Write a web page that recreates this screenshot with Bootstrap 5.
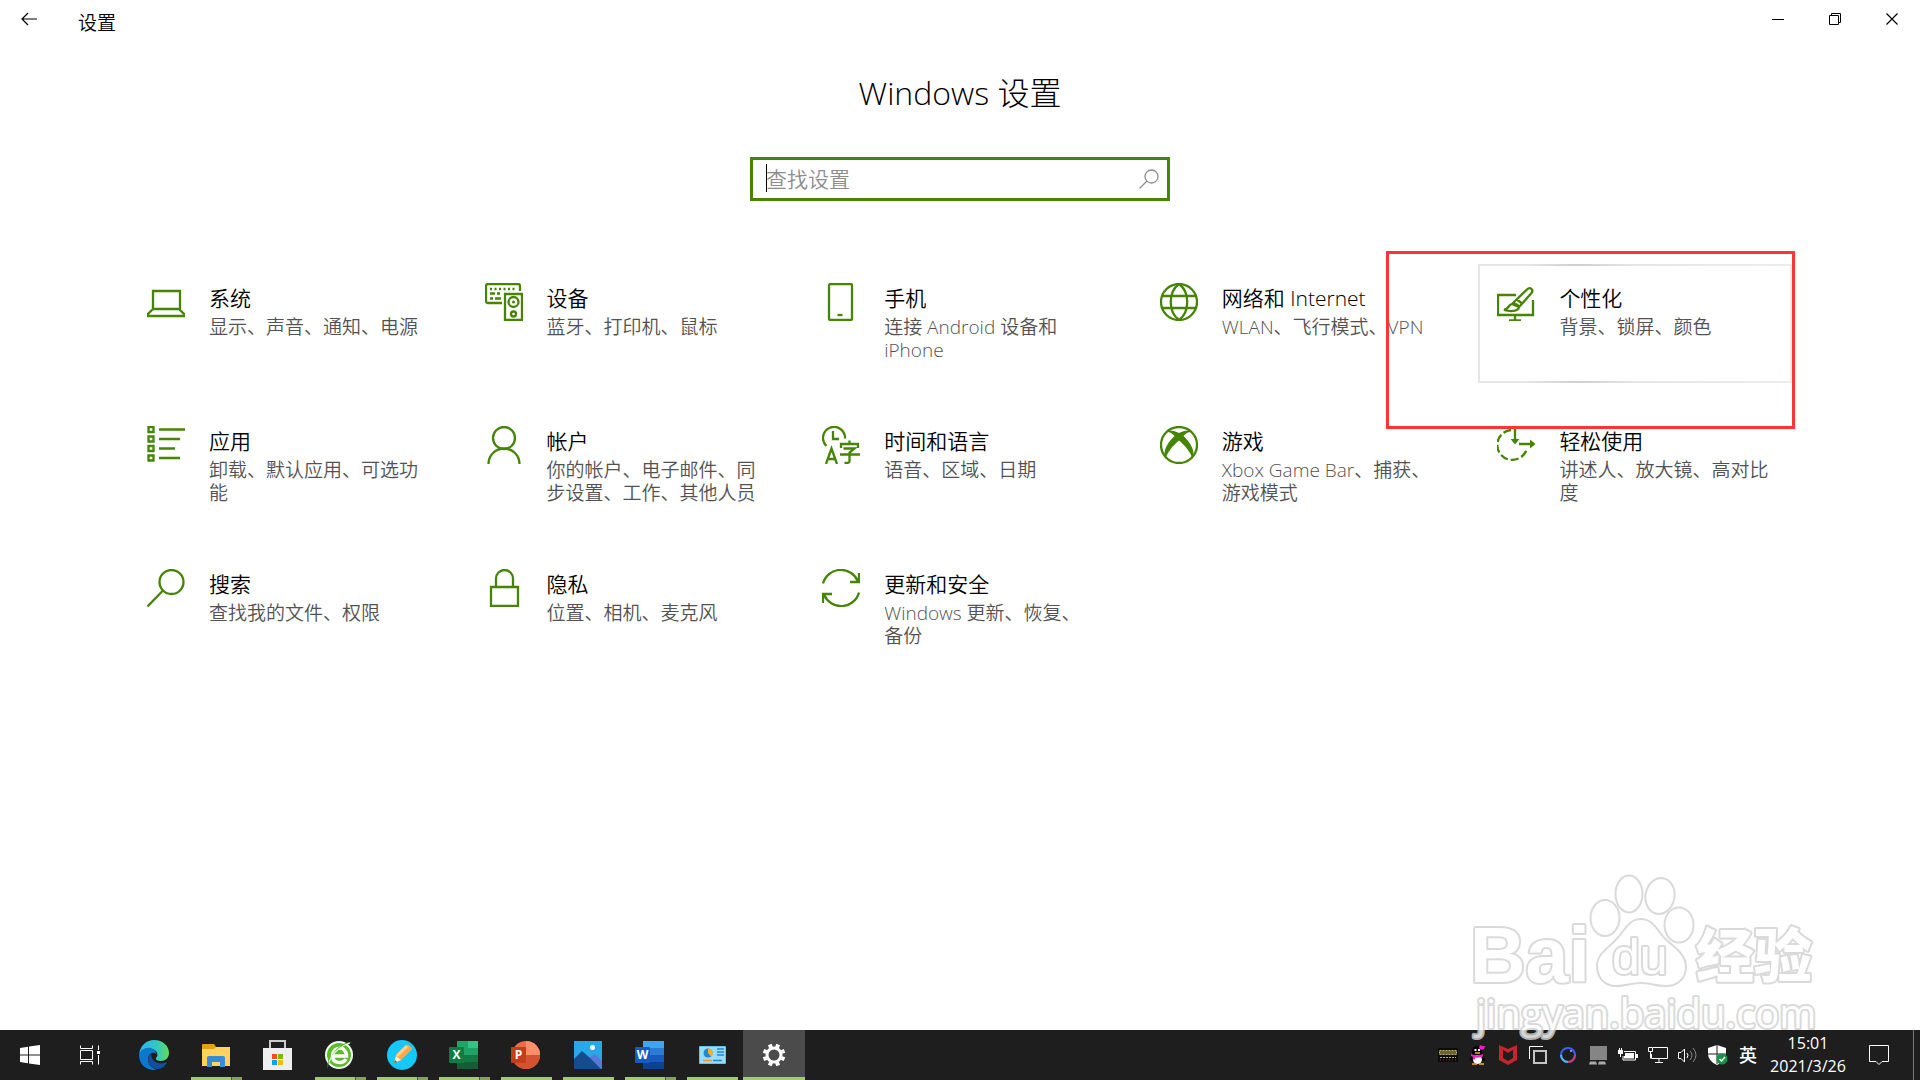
<!DOCTYPE html>
<html lang="zh-CN">
<head>
<meta charset="utf-8">
<meta name="viewport" content="width=device-width, initial-scale=1">
<title>设置</title>
<link rel="stylesheet" href="https://cdn.jsdelivr.net/npm/bootstrap@5.3.0/dist/css/bootstrap.min.css">
<style>
:root{--accent:#468405;--run:#a1cd63;--run-dark:#83a457}
body{font-family:"Open Sans","Noto Sans CJK SC",sans-serif;background:#fff;color:#000}
.bare{border:0;background:none;padding:0;color:inherit;display:flex;align-items:center;justify-content:center}
.win-btn{width:57px;height:38px}
.back-btn{width:58px;height:38px}
.app-title{font-size:19px;line-height:30px;padding:8px 0 0 20px;font-weight:350}
.page-title{font-size:32px;line-height:42px;font-weight:300;margin:34px 0 43px}
.finder{width:420px;height:44px;border:3px solid var(--accent);background:#fff}
.finder input{border:0;outline:0;background:none;font-size:21px;font-weight:350;line-height:30px;padding:0 0 0 13px;min-width:0}
.finder input::placeholder{color:#8d8d8d;opacity:1}
.finder .caret{position:absolute;left:13px;top:4px;width:1px;height:28px;background:#000}
.settings-area{padding:63px 128px 24px}
.tiles{--bs-gutter-x:24px;--bs-gutter-y:24px}
.tile{display:flex;gap:24px;min-height:119px;padding:19px 20px 0 19px;color:#000;text-decoration:none;height:100%}
.tile svg{width:38px;height:38px;flex:none;fill:none;stroke:var(--accent);stroke-width:2.3}
.tile .solid{fill:var(--accent);stroke:none}
.tile-name{font-size:21px;line-height:30px;font-weight:350;display:block;margin-bottom:3px}
.tile-info{font-size:19px;line-height:23px;font-weight:350;color:#525252;display:block}
.tile.hot{border:2px solid #e4e4e4;border-image:linear-gradient(90deg,#e6e6e6 15%,#cfcfcf 32%,#e6e6e6 50%,#ececec) 2;padding:17px 18px 0 17px}
.marker{position:absolute;left:-80px;right:9px;top:-13px;bottom:-46px;border:3px solid #ff3535;pointer-events:none;z-index:2}
.watermark{position:absolute;right:80px;bottom:30px;width:400px;height:190px;pointer-events:none;z-index:3;opacity:.82}
.watermark text,.watermark path,.watermark ellipse{fill:#fff;stroke:#d2d2d2;stroke-width:4;paint-order:stroke;stroke-linejoin:round}
.taskbar{background:#1e1e1e;height:50px;color:#fff}
.sys{width:60px;height:50px}
.task-view{margin-right:3px}
.app{width:62px;height:50px;position:relative}
.app.on::after{content:"";position:absolute;left:6px;right:5px;bottom:0;height:3px;background:var(--run)}
.app.multi::after{background:linear-gradient(90deg,var(--run) 40px,#4c5c38 40px,#4c5c38 41px,var(--run-dark) 41px)}
.app.current{background:#4b4b4b}
.app.current::after{left:0;right:0}
.tray{width:30px;height:50px}
.clock{width:90px;font-size:16px;line-height:23px;text-align:center}
.ime{font-size:18px;font-weight:500}
.peek{width:7px;border-left:1px solid #777}
</style>
</head>
<body>
<div class="d-flex flex-column min-vh-100 position-relative">
<header class="d-flex align-items-start">
  <button class="bare back-btn" aria-label="返回"><svg width="16" height="14" viewBox="0 0 16 14" fill="none" stroke="#000" stroke-width="1.2"><path d="M7 1 1 7l6 6M1 7h15"/></svg></button>
  <div class="app-title">设置</div>
  <div class="d-flex ms-auto">
    <button class="bare win-btn" aria-label="最小化"><svg width="12" height="12"><path d="M0 6.5h12" stroke="#000"/></svg></button>
    <button class="bare win-btn" aria-label="还原"><svg width="12" height="12" fill="none" stroke="#000"><path d="M.5 2.5h9v9h-9zM2.500 2.500v-2h9v9h-2"/></svg></button>
    <button class="bare win-btn" aria-label="关闭"><svg width="12" height="12"><path d="M.5.5l11 11M11.500.5l-11 11" stroke="#000" stroke-width="1.2"/></svg></button>
  </div>
</header>

<main class="flex-grow-1">
  <div class="d-flex flex-column align-items-center">
    <h1 class="page-title">Windows 设置</h1>
    <div class="finder d-flex align-items-center position-relative">
      <input type="text" class="flex-grow-1" placeholder="查找设置" aria-label="查找设置">
      <span class="caret"></span>
      <button class="bare me-2" aria-label="搜索"><svg width="20" height="20" viewBox="0 0 20 20" fill="none" stroke="#8d8d8d" stroke-width="1.300"><circle cx="12.500" cy="7.500" r="6.500"/><path d="M8 12 .5 19.500"/></svg></button>
    </div>
  </div>

  <nav class="settings-area" aria-label="设置类别">
    <div class="row row-cols-1 row-cols-md-3 row-cols-xl-5 tiles">
      <div class="col"><a href="#" class="tile">
        <svg viewBox="0 0 38 38"><path d="M6 8h27v18H6zM6 26l-5 5v2h36v-2l-5-5"/></svg>
        <span><span class="tile-name">系统</span><span class="tile-info">显示、声音、通知、电源</span></span></a></div>
      <div class="col"><a href="#" class="tile">
        <svg viewBox="0 0 38 38"><path d="M17 20H3a2 2 0 0 1-2-2V3a2 2 0 0 1 2-2h30a2 2 0 0 1 2 2v5"/><path stroke-dasharray="2 2.500" d="M5 6h26"/><path d="M5 10.500h5m2 0h3M5 15.500h3m2 0h6"/><path d="M20 11h17v26H20z"/><circle cx="28.500" cy="19" r="5"/><circle class="solid" cx="28.500" cy="19" r="1.500"/><circle cx="28.500" cy="31" r="2.500"/></svg>
        <span><span class="tile-name">设备</span><span class="tile-info">蓝牙、打印机、鼠标</span></span></a></div>
      <div class="col"><a href="#" class="tile">
        <svg viewBox="0 0 38 38"><rect x="7" y="1" width="23" height="36" rx="1.500"/><path d="M15.500 32h5"/></svg>
        <span><span class="tile-name">手机</span><span class="tile-info">连接 Android 设备和 iPhone</span></span></a></div>
      <div class="col"><a href="#" class="tile">
        <svg viewBox="0 0 38 38"><circle cx="19" cy="19" r="18"/><path d="M19 1C8 9 8 29 19 37M19 1c11 8 11 28 0 36M3 13h32M3 25h32"/></svg>
        <span><span class="tile-name">网络和 Internet</span><span class="tile-info">WLAN、飞行模式、VPN</span></span></a></div>
      <div class="col position-relative"><a href="#" class="tile hot">
        <svg viewBox="0 0 38 38"><path d="M19 12H1v20h35V17M18 33v4M12 37.500h12" /><path d="m15 21 15-14.500c3-3 7 0 4.500 3.500L22 24M15 21c-4 1-3 5-8 6 6 1.500 14 2 15-3zM15 21c3-1 6 1 7 3M20 16.500l5 4"/></svg>
        <span><span class="tile-name">个性化</span><span class="tile-info">背景、锁屏、颜色</span></span></a><div class="marker"></div></div>
      <div class="col"><a href="#" class="tile">
        <svg viewBox="0 0 38 38"><path d="M1.500 1h5v5h-5zM1.500 10.500h5v5h-5zM1.500 20h5v5h-5zM1.500 29.500h5v5h-5zM12 3.500h26M12 13h21M12 22.500h16M12 32h21"/></svg>
        <span><span class="tile-name">应用</span><span class="tile-info">卸载、默认应用、可选功能</span></span></a></div>
      <div class="col"><a href="#" class="tile">
        <svg viewBox="0 0 38 38"><circle cx="19" cy="12" r="11"/><path d="M3.500 38a15.500 15.500 0 0 1 31 0"/></svg>
        <span><span class="tile-name">帐户</span><span class="tile-info">你的帐户、电子邮件、同步设置、工作、其他人员</span></span></a></div>
      <div class="col"><a href="#" class="tile">
        <svg viewBox="0 0 38 38"><path d="M4.500 20A11 11 0 1 1 23 12.500M11 5v8h6"/><path d="m4 38 5.500-15.500L15 38M6 33h7M27.500 14.500V18M19 22v-4h17v4M21.500 22.500h11l-5 4V35c0 2-1 2-5 2M18 28.500h20"/></svg>
        <span><span class="tile-name">时间和语言</span><span class="tile-info">语音、区域、日期</span></span></a></div>
      <div class="col"><a href="#" class="tile">
        <svg viewBox="0 0 38 38"><circle cx="19" cy="19" r="18"/><path class="solid" d="M6.500 6c4-2.500 9-1 12.500 1 3.500-2 8.500-3.500 12.500-1-3-.5-6 1.500-8 4 6 6 12.500 14 9 23-1.500-6.500-8-14-13.500-18.500C13.500 19 7 26.500 5.500 33 2 24 8.500 16 14.500 10c-2-2.500-5-4.500-8-4z"/></svg>
        <span><span class="tile-name">游戏</span><span class="tile-info">Xbox Game Bar、捕获、游戏模式</span></span></a></div>
      <div class="col"><a href="#" class="tile">
        <svg viewBox="0 0 38 38"><path stroke-dasharray="8 3" d="M14 4a15 15 0 1 0 16 18"/><path d="M18 0v15M22 18h13"/><path class="solid" d="M13.500 13h9L18 18.500zM33 13.500v9l5.500-4.500z"/></svg>
        <span><span class="tile-name">轻松使用</span><span class="tile-info">讲述人、放大镜、高对比度</span></span></a></div>
      <div class="col"><a href="#" class="tile">
        <svg viewBox="0 0 38 38"><circle cx="24.500" cy="13" r="12"/><path d="M16 21.500.500 37.500"/></svg>
        <span><span class="tile-name">搜索</span><span class="tile-info">查找我的文件、权限</span></span></a></div>
      <div class="col"><a href="#" class="tile">
        <svg viewBox="0 0 38 38"><path d="M6 18h27v19H6zM11 18V9.500a8.500 8.500 0 0 1 17 0V18"/></svg>
        <span><span class="tile-name">隐私</span><span class="tile-info">位置、相机、麦克风</span></span></a></div>
      <div class="col"><a href="#" class="tile">
        <svg viewBox="0 0 38 38"><path d="M1 14.500a18.500 18.500 0 0 1 35-2M37 4v9h-9M37 23.500a18.500 18.500 0 0 1-35 2M1 34v-9h9"/></svg>
        <span><span class="tile-name">更新和安全</span><span class="tile-info">Windows 更新、恢复、备份</span></span></a></div>
    </div>
  </nav>
</main>

<svg class="watermark" viewBox="0 0 400 190" aria-label="Baidu 经验">
  <text x="30" y="122" font-family="Liberation Sans" font-weight="700" font-size="77">Bai</text>
  <ellipse cx="165" cy="58" rx="13.500" ry="17"/><ellipse cx="189" cy="34" rx="12.500" ry="17.500"/><ellipse cx="220" cy="36" rx="13.500" ry="17" transform="rotate(10 220 36)"/><ellipse cx="239" cy="65" rx="13.500" ry="16.500"/>
  <path d="M201 60c12 0 15 11 24 20 9 8 20 15 20 27s-9 18-19 18c-9 0-16-3-25-3s-16 3-25 3c-11 0-18-8-18-19 0-12 11-17 19-26 9-9 12-20 24-20z"/>
  <text x="172" y="114" font-family="Liberation Sans" font-size="50">du</text>
  <text x="256" y="117" font-family="Noto Sans CJK SC" font-weight="900" font-size="58">经验</text>
  <text x="36" y="168" font-family="Open Sans" font-size="40">jingyan.baidu.com</text>
</svg>

<footer class="taskbar d-flex">
  <button class="bare sys" aria-label="开始"><svg width="20" height="20" fill="#fff"><path d="M0 3l8-1.200V9.500H0zM9 1.600 20 0v9.500H9zM0 10.500h8v7.700L0 17zM9 10.500h11V20L9 18.400z"/></svg></button>
  <button class="bare sys task-view" aria-label="任务视图"><svg width="20" height="20" fill="none" stroke="#fff"><path d="M.5.500v3h12v-3M.5 5.500h12v9H.5zM.5 19.500v-3h12v3M18.500.500V5M18.500 10v9.500"/><path d="M17 6h3v3h-3z" fill="#fff" stroke="none"/></svg></button>
  <button class="bare app" aria-label="Edge"><svg width="30" height="30" viewBox="0 0 30 30"><defs><linearGradient id="ea"><stop stop-color="#2bb5ee"/><stop offset=".6" stop-color="#35c6c0"/><stop offset="1" stop-color="#62df55"/></linearGradient></defs><path d="M0 15C1 5 8 0 15 0c9 0 15 6 15 13 0 5-4 8-8 8-3 0-6-1-5-3 3-3 1-8-4-9-6-1-11 1-13 6z" fill="url(#ea)"/><path d="M0 15c1-5 6-8 12-7 3 1 5 3 5 6-3-3-8 0-8 5 0 6 4 9 9 11C8 31 0 25 0 15z" fill="#0b78d0"/><path d="M13 13c-5 3-5 9-1 13 4 5 13 4 16-4-6 3-13 1-15-4-1-2-1-4 0-5z" fill="#11509e"/></svg></button>
  <button class="bare app on multi" aria-label="文件资源管理器"><svg width="28" height="24"><path d="M0 2q0-1 1-1h11l2 3h12q2 0 2 2v16H1q-1 0-1-1z" fill="#e5a20a"/><path d="M0 6h12l2-2h14v19H0z" fill="#ffd35c"/><path d="M5 24V15q0-2 2-2h14q2 0 2 2v9h-5v-5h-8v5z" fill="#368edb"/></svg></button>
  <button class="bare app" aria-label="Microsoft Store"><svg width="30" height="30"><path d="M7 9V1h15v8" fill="none" stroke="#ccc" stroke-width="2"/><path d="M0 8h29v22H0z" fill="#eee"/><path fill="#f25022" d="M9 14h5v5H9z"/><path fill="#7fba00" d="M15 14h5v5h-5z"/><path fill="#00a4ef" d="M9 20h5v5H9z"/><path fill="#ffb900" d="M15 20h5v5h-5z"/></svg></button>
  <button class="bare app on multi" aria-label="360浏览器"><svg width="30" height="30" fill="none"><circle cx="14" cy="15" r="13" fill="#5cbb2b" stroke="#f1fff0" stroke-width="2"/><path d="M7.500 16h14c0-11-14-10-14 0 0 8 11 8 13.500 3" stroke="#fff" stroke-width="3.500"/><path d="M3 29C-1 18 18 4 27 2c-9-1-24 11-24 27z" fill="#3da32b"/><path d="M4 22C8 12 17 5 25 3" stroke="#dff7d2" stroke-width="1.200"/></svg></button>
  <button class="bare app on multi" aria-label="画笔"><svg width="30" height="30"><circle cx="15" cy="15" r="15" fill="#14c8fa"/><path d="M7 23l2-8L19 5q3-1 6 4L14 20z" fill="#ffa847"/><path d="m10 16 10-10" stroke="#ffd18b" stroke-width="3"/><path d="m7 23 2-7 5 4z" fill="#fff0d0"/><path d="m7 23 1-3 2 2z" fill="#555"/></svg></button>
  <button class="bare app on multi" aria-label="Excel"><svg width="30" height="28"><path fill="#21a366" d="M8 0h21v28H8z"/><path fill="#33c481" d="M19 0h10v7H19z"/><path fill="#107c41" d="M8 14h21v7H8z"/><path fill="#185c37" d="M8 21h21v7H8z"/><rect y="6" width="15" height="16" rx="1" fill="#107c41"/><text x="7.500" y="18" fill="#fff" font-size="12" font-weight="700" text-anchor="middle">X</text></svg></button>
  <button class="bare app on" aria-label="PowerPoint"><svg width="30" height="28"><circle cx="15" cy="14" r="14" fill="#ed6c47"/><path d="M15 0a14 14 0 0 1 14 14H15z" fill="#ff8f6b"/><path d="M1 14h28a14 14 0 0 1-28 0z" fill="#d35230"/><rect y="6" width="15" height="16" rx="1" fill="#c43e1c"/><text x="7.500" y="18" fill="#fff" font-size="12" font-weight="700" text-anchor="middle">P</text></svg></button>
  <button class="bare app on" aria-label="照片"><svg width="28" height="28"><path fill="#29a8e8" d="M0 0h28v28H0z"/><path d="m14 17 7-4 7 7v8H14z" fill="#5a79d6"/><path d="M0 18l8-8 8 7 11 11H0z" fill="#174b8e"/><circle cx="18.500" cy="6.500" r="2.500" fill="#fff"/></svg></button>
  <button class="bare app on multi" aria-label="Word"><svg width="30" height="28"><path fill="#41a5ee" d="M8 0h21v7H8z"/><path fill="#2b7cd3" d="M8 7h21v7H8z"/><path fill="#185abd" d="M8 14h21v7H8z"/><path fill="#103f91" d="M8 21h21v7H8z"/><rect y="6" width="15" height="16" rx="1" fill="#185abd"/><text x="7.500" y="18" fill="#fff" font-size="12" font-weight="700" text-anchor="middle">W</text></svg></button>
  <button class="bare app on" aria-label="控制面板"><svg width="27" height="18"><rect width="27" height="18" rx="1" fill="#62c4f4"/><path fill="#b9e9ff" d="M1 1h25v16H1z" opacity=".65"/><circle cx="9" cy="7" r="4.500" fill="#2587d2"/><path d="M9 7V2.500A4.500 4.500 0 0 1 12 10.500z" fill="#ffad25"/><path d="M18 3h7M18 6h7M18 9h7M14 14.500h9" stroke="#2587d2" stroke-width="1.500"/><path d="M4 14.500h9" stroke="#f29a18" stroke-width="1.500"/></svg></button>
  <button class="bare app on current" aria-label="设置"><svg width="24" height="24" viewBox="-12 -12 24 24" stroke="#fff" fill="none"><circle r="7" stroke-width="3"/><g stroke-width="4"><path d="M3-7.500 4.200-10.500M7.500-3l3-1.200M7.500 3l3 1.200M3 7.500l1.200 3M-3 7.500l-1.200 3M-7.500 3l-3 1.200M-7.500-3l-3-1.200M-3-7.500l-1.200-3"/></g></svg></button>

  <div class="d-flex ms-auto">
    <button class="bare tray" aria-label="键盘"><svg width="20" height="14"><path fill="#0c0b06" d="M0 0h20v14H0z"/><path d="M1.500 2.500h17v4h-17z" fill="#6d6138" stroke="#c4ae6b" stroke-dasharray="2 1"/><path d="M2 9.500h16" stroke="#c4ae6b" stroke-dasharray="2 1"/><path d="M2 12h16" stroke="#7e3e2b" stroke-dasharray="1 2"/></svg></button>
    <button class="bare tray" aria-label="QQ"><svg width="16" height="20"><path d="M2 10q-2 3-2 6l2-1 1-3zM13 10q2 3 2 6l-2-1-1-3z" fill="#000"/><ellipse cx="7.500" cy="12" rx="6" ry="7" fill="#000"/><circle cx="7" cy="6" r="5" fill="#000"/><ellipse cx="7.500" cy="14.500" rx="4.500" ry="4.500" fill="#fff"/><path d="M4.500 4h2v2h-2zM8 4h2v2H8z" fill="#fff"/><path d="M5 8h5M2 19h5M9 19h5" stroke="#f7ad20" stroke-width="1.500"/><path d="M1 9q6 2.500 12 0v2.500q-4 1.500-8 1v2H3v-2.500L1 11zM9 3l1-3 2 1 3 0-1 3-3 1z" fill="#ff1cc8"/></svg></button>
    <button class="bare tray" aria-label="McAfee"><svg width="18" height="20"><path d="m0 0 9 4 9-4v15l-9 5-9-5zm4 5v8l5 3 5-3V5L9 8z" fill="#c5252b"/></svg></button>
    <button class="bare tray" aria-label="窗口"><svg width="18" height="18" fill="none"><path d="M.5 13V.5H14" stroke="#fff"/><path d="M5 5h12v12H5z" stroke="#c4c4c4" stroke-width="2"/></svg></button>
    <button class="bare tray" aria-label="Cortana"><svg width="18" height="18" fill="none" stroke-width="2"><circle cx="9" cy="9" r="7" stroke="#3b62ed"/><path d="M2 9a7 7 0 0 0 7 7" stroke="#4bb6f0"/><path d="M16 9a7 7 0 0 1-7 7" stroke="#c53d74"/><circle cx="12" cy="5" r="1" fill="#b5a5ff" stroke="none"/></svg></button>
    <button class="bare tray" aria-label="触控板"><svg width="18" height="20"><path fill="#858585" d="M1 1h17v14H1z"/><path fill="#aaa" d="M1 16.500h6l1 3H0zM10 16.500h6l1 3H9z"/></svg></button>
    <button class="bare tray" aria-label="电池"><svg width="20" height="14"><path d="M6 3.500h11.500V12H5V8" fill="none" stroke="#fff"/><path d="M7 5h9v5.500H6V8h1zM18 6h2v4h-2zM0 2h5v4H3v3H2V6H0zM1 0h1v2H1zM3 0h1v2H3z" fill="#fff"/></svg></button>
    <button class="bare tray" aria-label="网络"><svg width="20" height="16" fill="none" stroke="#fff"><path d="M5 .5h14.500v11H3.500V7M7 15.500h8M11 11.500v4M.5.500h4v4h-4zM2.500 4.500v7"/></svg></button>
    <button class="bare tray" aria-label="音量"><svg width="20" height="16" fill="none" stroke="#fff"><path d="M.5 5.500H3L6.500 2v13L3 11.500H.500zM9 6q2 2 0 5"/><path d="M12 4q4 4 0 9M15 1q6 7 0 14" stroke="#888"/></svg></button>
    <button class="bare tray" aria-label="安全"><svg width="20" height="20"><path d="M9 0 18 3v6q0 7-9 11Q0 16 0 9V3z" fill="#fff"/><path d="M9 0v19M0 9h18" stroke="#1e1e1e"/><circle cx="14" cy="14" r="5.500" fill="#159445"/><path d="m11.500 14 2 2 3.500-4" fill="none" stroke="#fff" stroke-width="1.500"/></svg></button>
    <button class="bare tray ime">英</button>
    <button class="bare clock"><span>15:01<br>2021/3/26</span></button>
    <button class="bare sys" aria-label="通知"><svg class="me-2" width="20" height="20" fill="none" stroke="#fff"><path d="M.5.500h19v16H13l-3 3-3-3H.5z"/></svg></button>
    <div class="peek"></div>
  </div>
</footer>
</div>
<script src="https://cdn.jsdelivr.net/npm/bootstrap@5.3.0/dist/js/bootstrap.bundle.min.js"></script>
</body>
</html>
